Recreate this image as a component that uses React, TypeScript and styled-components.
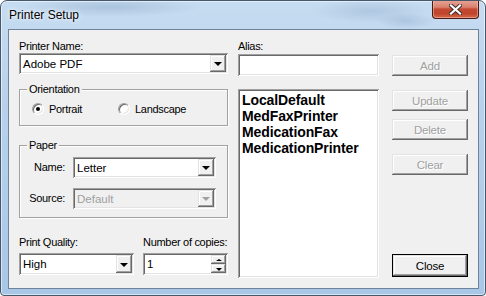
import React from 'react';
import styled, { createGlobalStyle, css } from 'styled-components';

const GlobalStyle = createGlobalStyle`
  html, body {
    margin: 0;
    padding: 0;
    background: #ffffff;
  }

  body {
    width: 486px;
    height: 296px;
    overflow: hidden;
    font-family: 'Liberation Sans', Arial, sans-serif;
    font-size: 11px;
    color: #000;
  }
`;

// classic 3d borders
const sunken = css`
  box-shadow:
    inset 1px 1px 0 #a0a0a0,
    inset -1px -1px 0 #ffffff,
    inset 2px 2px 0 #696969,
    inset -2px -2px 0 #e3e3e3;
`;

const raised = css`
  box-shadow:
    inset -1px -1px 0 #696969,
    inset 1px 1px 0 #e3e3e3,
    inset -2px -2px 0 #a0a0a0,
    inset 2px 2px 0 #ffffff;
`;

const Frame = styled.div`
  box-sizing: border-box;
  width: 486px;
  height: 296px;
  display: flex;
  flex-direction: column;
  padding: 0 6px 6px 7px;
  border: 1px solid #48586c;
  border-radius: 7px 7px 4px 4px;
  background:
    radial-gradient(ellipse 90px 10px at 110px 6px, rgba(110, 140, 175, 0.3), transparent),
    radial-gradient(ellipse 60px 12px at 370px 10px, rgba(110, 140, 175, 0.25), transparent),
    radial-gradient(ellipse 30px 8px at 405px 20px, rgba(110, 140, 175, 0.25), transparent),
    linear-gradient(180deg, #c6dcf1 0%, #b8d2ec 35%, #a8c7e6 100%);
  box-shadow: inset 0 0 0 1px rgba(255, 255, 255, 0.55);
  overflow: hidden;
`;

const TitleBar = styled.div`
  height: 28px;
  display: flex;
  justify-content: space-between;
  align-items: flex-start;
  flex-shrink: 0;
`;

const Title = styled.div`
  font-family: 'Liberation Sans', Arial, sans-serif;
  font-size: 12px;
  line-height: 15px;
  padding: 7px 0 0 1px;
  color: #000;
  text-shadow: 0 0 6px rgba(255, 255, 255, 0.9), 0 0 3px rgba(255, 255, 255, 0.9);
`;

const CloseCaption = styled.div`
  width: 47px;
  height: 19px;
  margin-top: -1px;
  box-sizing: border-box;
  border: 1px solid #4a1a14;
  border-top: none;
  border-radius: 0 0 4px 4px;
  background: linear-gradient(180deg, #e7a697 0%, #d9826f 40%, #c44a33 50%, #c0442c 75%, #d46a4c 100%);
  box-shadow: inset 0 0 0 1px rgba(255, 210, 200, 0.45);
  display: flex;
  align-items: center;
  justify-content: center;
`;

const Client = styled.div`
  flex: 1;
  display: flex;
  background: #f0f0f0;
  border: 1px solid #6e8399;
  padding: 10px 10px 0 10px;
`;

const LeftCol = styled.div`
  width: 209px;
  display: flex;
  flex-direction: column;
`;

const MidCol = styled.div`
  width: 141px;
  margin-left: 10px;
  display: flex;
  flex-direction: column;
`;

const ButtonCol = styled.div`
  width: 76px;
  margin-left: 13px;
  display: flex;
  flex-direction: column;
`;

const Label = styled.div<{ $width?: number; $right?: boolean }>`
  height: 13px;
  line-height: 13px;
  letter-spacing: -0.3px;
  white-space: nowrap;
  ${(p) => p.$width && `width: ${p.$width}px; flex-shrink: 0;`}
  ${(p) => p.$right && 'text-align: right;'}
`;

const ComboBox = styled.div<{ $width?: number; $disabled?: boolean; $height?: number }>`
  box-sizing: border-box;
  height: ${(p) => p.$height ?? 21}px;
  ${(p) => (p.$width ? `width: ${p.$width}px;` : '')}
  display: flex;
  align-items: stretch;
  padding: 2px;
  background: ${(p) => (p.$disabled ? '#f0f0f0' : '#ffffff')};
  color: ${(p) => (p.$disabled ? '#a0a0a0' : '#000')};
  ${sunken}
`;

const ComboText = styled.div`
  flex: 1;
  padding-left: 2px;
  display: flex;
  align-items: center;
  white-space: nowrap;
  font-size: 11.5px;
`;

const DropButton = styled.div`
  width: 16px;
  background: #f0f0f0;
  display: flex;
  align-items: center;
  justify-content: center;
  ${raised}
`;

const Arrow = styled.div<{ $up?: boolean; $disabled?: boolean; $size?: number }>`
  width: 0;
  height: 0;
  border-left: ${(p) => p.$size ?? 4}px solid transparent;
  border-right: ${(p) => p.$size ?? 4}px solid transparent;
  ${(p) =>
    p.$up
      ? `border-bottom: ${(p.$size ?? 4) - 1}px solid ${p.$disabled ? '#a0a0a0' : '#000'};`
      : `border-top: ${p.$size ?? 4}px solid ${p.$disabled ? '#a0a0a0' : '#000'};`}
  margin-top: 1px;
`;

const GroupBox = styled.div<{ $height: number; $top: number }>`
  position: relative;
  box-sizing: border-box;
  height: ${(p) => p.$height}px;
  margin-top: ${(p) => p.$top}px;
  border: 1px solid #a0a0a0;
  box-shadow: inset 1px 1px 0 #ffffff, 1px 1px 0 #ffffff;
`;

const Legend = styled.div`
  position: absolute;
  top: -7px;
  left: 7px;
  padding: 0 2px 0 2px;
  background: #f0f0f0;
  height: 13px;
  line-height: 13px;
  letter-spacing: -0.3px;
`;

const RadioRow = styled.div`
  display: flex;
  align-items: center;
  padding: 12px 0 0 12px;
  height: 13px;
`;

const RadioItem = styled.label<{ $width?: number }>`
  display: flex;
  align-items: center;
  gap: 5px;
  letter-spacing: -0.3px;
  ${(p) => p.$width && `width: ${p.$width}px;`}
`;

const RadioCircle = styled.span<{ $checked?: boolean }>`
  position: relative;
  width: 12px;
  height: 12px;
  box-sizing: border-box;
  border-radius: 50%;
  background: #fff;
  border: 1px solid;
  border-color: #a0a0a0 #ffffff #ffffff #a0a0a0;
  box-shadow: inset 1px 1px 0 #696969, inset -1px -1px 0 #e3e3e3;
  &::after {
    content: '';
    display: ${(p) => (p.$checked ? 'block' : 'none')};
    position: absolute;
    left: 3px;
    top: 3px;
    width: 4px;
    height: 4px;
    border-radius: 50%;
    background: #000;
  }
`;

const PaperRow = styled.div<{ $top: number }>`
  display: flex;
  align-items: center;
  gap: 8px;
  margin-top: ${(p) => p.$top}px;
  padding-left: 8px;
`;

const BottomRow = styled.div`
  display: flex;
  margin-top: 18px;
  gap: 9px;
`;

const Field = styled.div<{ $width: number }>`
  width: ${(p) => p.$width}px;
  display: flex;
  flex-direction: column;
  gap: 4px;
`;

const SpinButtons = styled.div`
  width: 15px;
  display: flex;
  flex-direction: column;
`;

const SpinHalf = styled.div`
  flex: 1;
  background: #f0f0f0;
  display: flex;
  align-items: center;
  justify-content: center;
  ${raised}
`;

const TextBox = styled.div<{ $height: number; $top?: number }>`
  box-sizing: border-box;
  height: ${(p) => p.$height}px;
  margin-top: ${(p) => p.$top ?? 0}px;
  background: #fff;
  ${sunken}
`;

const ListBox = styled(TextBox)`
  padding: 3px 4px;
`;

const ListItem = styled.div`
  font-size: 14px;
  font-weight: bold;
  line-height: 16px;
  letter-spacing: -0.1px;
  white-space: nowrap;
`;

const Button = styled.div<{ $top: number; $disabled?: boolean; $default?: boolean }>`
  box-sizing: border-box;
  height: ${(p) => (p.$default ? 23 : 21)}px;
  margin-top: ${(p) => p.$top}px;
  background: #f0f0f0;
  display: flex;
  align-items: center;
  justify-content: center;
  font-size: 11.5px;
  letter-spacing: -0.2px;
  color: ${(p) => (p.$disabled ? '#a0a0a0' : '#000')};
  ${(p) => p.$disabled && 'text-shadow: 1px 1px 0 #ffffff;'}
  ${(p) =>
    p.$default
      ? css`
          border: 1px solid #000;
          ${raised}
        `
      : raised}
`;

const CloseGlyph = () => (
  <svg width="13" height="11" viewBox="0 0 13 11">
    <path d="M2 1.5 L11 9.5 M11 1.5 L2 9.5" stroke="#3b2a2a" strokeWidth="4" strokeLinecap="square" />
    <path d="M2 1.5 L11 9.5 M11 1.5 L2 9.5" stroke="#ffffff" strokeWidth="2.2" strokeLinecap="square" />
  </svg>
);

const aliases = ['LocalDefault', 'MedFaxPrinter', 'MedicationFax', 'MedicationPrinter'];

const App = () => {
  return (
    <>
      <GlobalStyle />
      <Frame>
        <TitleBar>
          <Title>Printer Setup</Title>
          <CloseCaption>
            <CloseGlyph />
          </CloseCaption>
        </TitleBar>
        <Client>
          <LeftCol>
            <Label>Printer Name:</Label>
            <ComboBox>
              <ComboText>Adobe PDF</ComboText>
              <DropButton>
                <Arrow />
              </DropButton>
            </ComboBox>

            <GroupBox $height={37} $top={15}>
              <Legend>Orientation</Legend>
              <RadioRow>
                <RadioItem $width={86}>
                  <RadioCircle $checked />
                  Portrait
                </RadioItem>
                <RadioItem>
                  <RadioCircle />
                  Landscape
                </RadioItem>
              </RadioRow>
            </GroupBox>

            <GroupBox $height={73} $top={19}>
              <Legend>Paper</Legend>
              <PaperRow $top={11}>
                <Label $width={37} $right>
                  Name:
                </Label>
                <ComboBox $width={143}>
                  <ComboText>Letter</ComboText>
                  <DropButton>
                    <Arrow />
                  </DropButton>
                </ComboBox>
              </PaperRow>
              <PaperRow $top={10}>
                <Label $width={37} $right>
                  Source:
                </Label>
                <ComboBox $width={143} $disabled>
                  <ComboText>Default</ComboText>
                  <DropButton>
                    <Arrow $disabled />
                  </DropButton>
                </ComboBox>
              </PaperRow>
            </GroupBox>

            <BottomRow>
              <Field $width={115}>
                <Label>Print Quality:</Label>
                <ComboBox $height={22}>
                  <ComboText>High</ComboText>
                  <DropButton>
                    <Arrow />
                  </DropButton>
                </ComboBox>
              </Field>
              <Field $width={85}>
                <Label>Number of copies:</Label>
                <ComboBox $height={22}>
                  <ComboText>1</ComboText>
                  <SpinButtons>
                    <SpinHalf>
                      <Arrow $up $size={3} />
                    </SpinHalf>
                    <SpinHalf>
                      <Arrow $size={3} />
                    </SpinHalf>
                  </SpinButtons>
                </ComboBox>
              </Field>
            </BottomRow>
          </LeftCol>

          <MidCol>
            <Label>Alias:</Label>
            <TextBox $height={22} $top={1} />
            <ListBox $height={189} $top={13}>
              {aliases.map((a) => (
                <ListItem key={a}>{a}</ListItem>
              ))}
            </ListBox>
          </MidCol>

          <ButtonCol>
            <Button $top={15} $disabled>
              Add
            </Button>
            <Button $top={14} $disabled>
              Update
            </Button>
            <Button $top={8} $disabled>
              Delete
            </Button>
            <Button $top={14} $disabled>
              Clear
            </Button>
            <Button $top={79} $default>
              Close
            </Button>
          </ButtonCol>
        </Client>
      </Frame>
    </>
  );
};

export default App;
